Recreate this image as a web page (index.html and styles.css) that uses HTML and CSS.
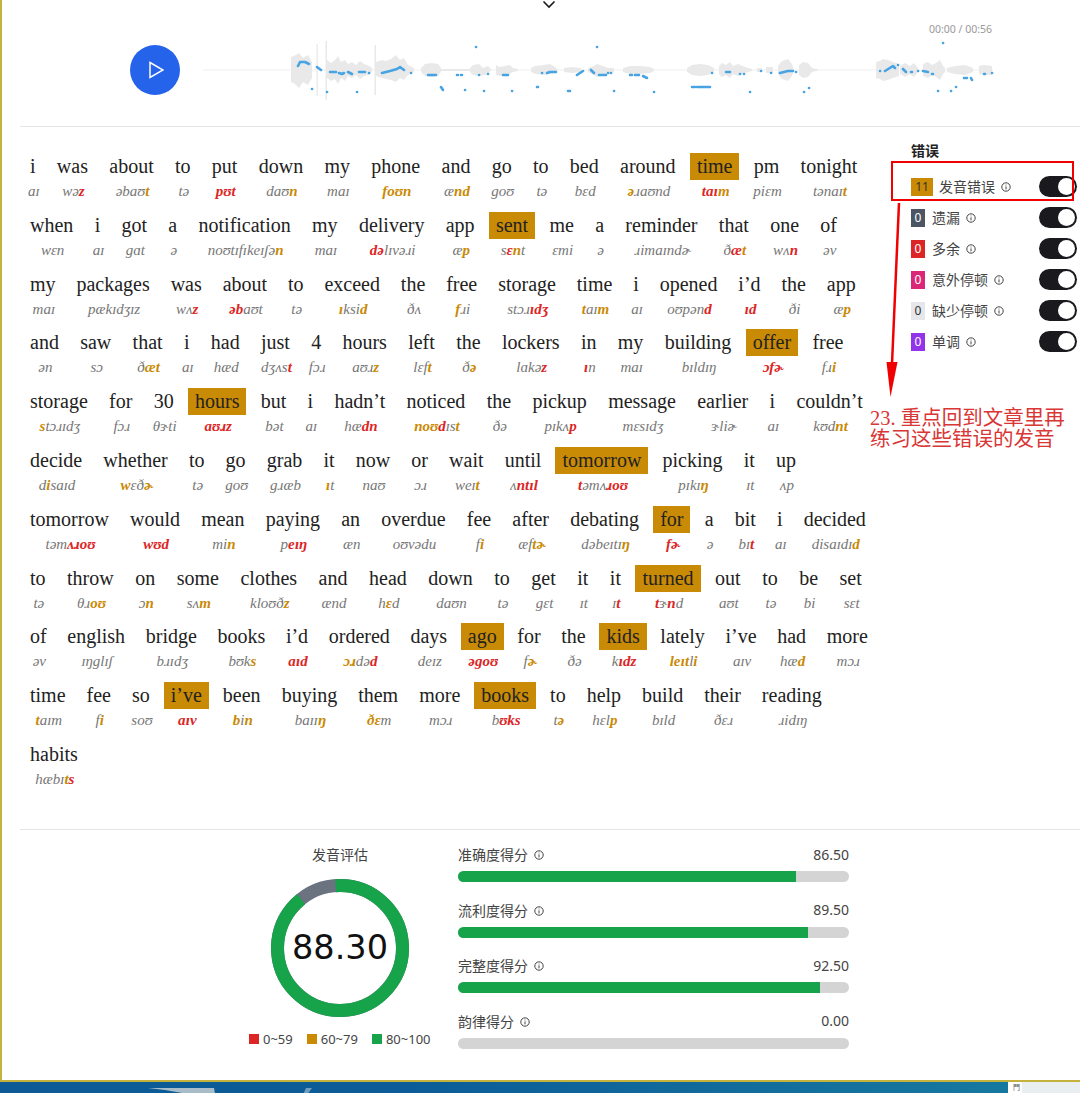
FILE: index.html
```html
<!DOCTYPE html>
<html lang="en">
<head>
  <meta charset="UTF-8">
  <title>发音评估</title>
  <link rel="stylesheet" href="styles.css">
</head>
<body>
  <svg class="defs" width="0" height="0">
    <symbol id="info" viewBox="0 0 10 10">
      <circle cx="5" cy="5" r="4.2" fill="none" stroke="currentColor" stroke-width="1"/>
      <path d="M5 4.4V7.4M5 2.6V3.4" stroke="currentColor" stroke-width="1"/>
    </symbol>
  </svg>

  <div class="window">
    <div class="player">
      <div class="chevron">
        <svg width="14" height="9" viewBox="0 0 14 9"><path d="M1.5 1.5L7 7L12.5 1.5" fill="none" stroke="#1a1a1a" stroke-width="1.6"/></svg>
      </div>
      <div class="time">00:00 / 00:56</div>
      <div class="player-row">
        <div class="play">
          <svg width="15" height="18" viewBox="0 0 15 18"><path d="M1 1.5L14 9L1 16.500Z" fill="none" stroke="#fff" stroke-width="1.5"/></svg>
        </div>
        <svg class="wave" width="800" height="60" viewBox="197 40 800 60">
          <path d="M203 70H993" stroke="#efefef" stroke-width="1"/>
          <g class="blobs">
            <path d="M291 57L296 55L299 53L303 58L308 55L312 62V78L308 85L303 82L299 88L295 84L291 82Z"/>
            <path d="M316.500 44H317.800V96H316.500ZM325.500 41H327V100H325.500ZM374.500 45H376V95H374.500Z"/>
            <path d="M327 60L331 63L335 60L338 56L341 62L345 60L348 64L352 62L356 65L360 61L364 64L369 66L372 68V72L369 75L364 76L360 79L356 75L352 78L348 76L345 81L341 78L338 84L335 79L331 81L327 78Z"/>
            <path d="M376 62L382 60L386 61L391 59L396 55L400 60L404 58L408 65L414 68V72L408 75L404 80L400 78L396 82L391 80L386 79L382 78L376 76Z"/>
            <path d="M421 68L425 64L432 63L438 64L441 68V72L438 76L432 77L425 76L421 72Z"/>
            <path d="M441 69H470V71H441Z"/>
            <path d="M470 68L473 65L479 64L483 68L488 66L491 69L490 72L486 75L479 76L473 75L470 72Z"/>
            <path d="M496 65L499 67L505 66L510 65L513 68L518 69V71L513 72L508 75L500 76L496 75Z"/>
            <path d="M531 68L535 66L544 65L550 64L555 67L558 70L554 73L544 75L536 74L531 72Z"/>
            <path d="M564 68L572 67L581 68V72L572 73L564 72Z"/>
            <path d="M588 68L594 66L597 64L603 66L608 68L614 68V72L608 74L597 77L592 74L588 72Z"/>
            <path d="M623 68L630 66L640 66L650 67L654 69V71L650 73L640 74L630 74L623 72Z"/>
            <path d="M687 68L692 65L700 64L708 65L714 68V72L708 75L700 76L692 75L687 72Z"/>
            <path d="M719 66L722 63L726 65L730 62L733 66L738 64L745 67L752 69V71L745 73L738 76L733 74L730 78L726 75L722 77L719 74Z"/>
            <path d="M757 68L762 68V72L757 72ZM766 67L773 67V73L766 73Z"/>
            <path d="M778 66L782 61L785 60L788 59L792 64L794 70L792 76L788 81L785 80L782 79L778 74Z"/>
            <path d="M799 65L803 62L808 63L812 68L818 69.500V70.500L812 72L808 77L803 78L799 75Z"/>
            <path d="M876 62L880 61L883 59L888 60L893 62L899 64V76L893 78L888 80L883 81L880 79L876 78Z"/>
            <path d="M900 66L905 63L910 66L914 63L918 68V72L914 77L910 74L905 77L900 74Z"/>
            <path d="M923 64L928 62L932 65L936 63L940 60L943 66L945 68V72L943 74L940 80L936 77L932 75L928 78L923 76Z"/>
            <path d="M947 68L955 66L965 65L973 68V72L965 75L955 74L947 72Z"/>
            <path d="M979 66L984 65L992 66V75L984 75L979 74Z"/>
          </g>
          <path class="pitch" d="M298 66L300 62L305 62L309 64M317 67L321 70M330 72H336M339 73L342 74L344 73M348 72L352 74M359 72H365M369 73H369.100M382 73L390 71L397 69L400 67L404 70M411 73H411.100M428 75H436M457 75H458M461 75H462M479 75H479.100M488 74H488.100M503 75H508M312 89H312.100M327 92H327.100M357 92H357.100M441 87L443 90M465 90H465.100M484 91H484.100M512 91H512.100M537 87H538M476 47H476.100M542 73H542.100M547 73L550 72L556 72M577 75L583 71M591 70L594 73M599 75H606M608 73H608.100M611 73H611.100M630 75H632M635 75H639M643 76L647 78M597 47H597.100M568 91H570M614 91H614.100M654 92H654.100M692 87H695M697 87H710M712 73H712.100M726 72H730M740 74H740.100M744 74H744.100M761 71H761.100M771 73H771.100M780 73L788 71L793 71M796 72H796.100M750 92H750.100M804 92H804.100M809 88H809.100M880 71H880.100M885 71L893 66L895 68M898 65H898.100M903 69L906 72M911 72H912M918 71H918.100M923 71L928 72M932 74H933M943 43H943.100M938 91H938.100M951 91H951.100M956 87H956.100M964 78H967M971 78L972 80M984 74H985M992 73H992.100"/>
        </svg>
      </div>
    </div>

    <div class="main">
      <div class="passage">
        <div class="line">
          <div class="word"><span class="w">i</span><span class="ipa"><i>aɪ</i></span></div>
          <div class="word"><span class="w">was</span><span class="ipa"><i>wə<b class="r">z</b></i></span></div>
          <div class="word"><span class="w">about</span><span class="ipa"><i>əbaʊ<b class="y">t</b></i></span></div>
          <div class="word"><span class="w">to</span><span class="ipa"><i>tə</i></span></div>
          <div class="word"><span class="w">put</span><span class="ipa"><i><b class="r">pʊt</b></i></span></div>
          <div class="word"><span class="w">down</span><span class="ipa"><i>daʊ<b class="y">n</b></i></span></div>
          <div class="word"><span class="w">my</span><span class="ipa"><i>maɪ</i></span></div>
          <div class="word"><span class="w">phone</span><span class="ipa"><i><b class="y">foʊn</b></i></span></div>
          <div class="word"><span class="w">and</span><span class="ipa"><i>æ<b class="y">nd</b></i></span></div>
          <div class="word"><span class="w">go</span><span class="ipa"><i>goʊ</i></span></div>
          <div class="word"><span class="w">to</span><span class="ipa"><i>tə</i></span></div>
          <div class="word"><span class="w">bed</span><span class="ipa"><i>bɛd</i></span></div>
          <div class="word"><span class="w">around</span><span class="ipa"><i><b class="y">ə</b>ɹaʊnd</i></span></div>
          <div class="word hl"><span class="w">time</span><span class="ipa"><i><b class="r">taɪ</b><b class="y">m</b></i></span></div>
          <div class="word"><span class="w">pm</span><span class="ipa"><i>piɛm</i></span></div>
          <div class="word"><span class="w">tonight</span><span class="ipa"><i>tənaɪ<b class="y">t</b></i></span></div>
        </div>
        <div class="line">
          <div class="word"><span class="w">when</span><span class="ipa"><i>wɛn</i></span></div>
          <div class="word"><span class="w">i</span><span class="ipa"><i>aɪ</i></span></div>
          <div class="word"><span class="w">got</span><span class="ipa"><i>gɑt</i></span></div>
          <div class="word"><span class="w">a</span><span class="ipa"><i>ə</i></span></div>
          <div class="word"><span class="w">notification</span><span class="ipa"><i>noʊtɪfɪkeɪʃə<b class="y">n</b></i></span></div>
          <div class="word"><span class="w">my</span><span class="ipa"><i>maɪ</i></span></div>
          <div class="word"><span class="w">delivery</span><span class="ipa"><i><b class="r">də</b>lɪvəɹi</i></span></div>
          <div class="word"><span class="w">app</span><span class="ipa"><i>æ<b class="y">p</b></i></span></div>
          <div class="word hl"><span class="w">sent</span><span class="ipa"><i>s<b class="r">ɛ</b><b class="y">n</b>t</i></span></div>
          <div class="word"><span class="w">me</span><span class="ipa"><i>ɛmi</i></span></div>
          <div class="word"><span class="w">a</span><span class="ipa"><i>ə</i></span></div>
          <div class="word"><span class="w">reminder</span><span class="ipa"><i>ɹimaɪndɚ</i></span></div>
          <div class="word"><span class="w">that</span><span class="ipa"><i>ð<b class="r">æ</b><b class="y">t</b></i></span></div>
          <div class="word"><span class="w">one</span><span class="ipa"><i>wʌ<b class="r">n</b></i></span></div>
          <div class="word"><span class="w">of</span><span class="ipa"><i>əv</i></span></div>
        </div>
        <div class="line">
          <div class="word"><span class="w">my</span><span class="ipa"><i>maɪ</i></span></div>
          <div class="word"><span class="w">packages</span><span class="ipa"><i>pækɪdʒɪz</i></span></div>
          <div class="word"><span class="w">was</span><span class="ipa"><i>wʌ<b class="r">z</b></i></span></div>
          <div class="word"><span class="w">about</span><span class="ipa"><i><b class="r">əb</b>aʊt</i></span></div>
          <div class="word"><span class="w">to</span><span class="ipa"><i>tə</i></span></div>
          <div class="word"><span class="w">exceed</span><span class="ipa"><i><b class="y">ɪ</b>ksi<b class="y">d</b></i></span></div>
          <div class="word"><span class="w">the</span><span class="ipa"><i>ðʌ</i></span></div>
          <div class="word"><span class="w">free</span><span class="ipa"><i><b class="y">f</b>ɹi</i></span></div>
          <div class="word"><span class="w">storage</span><span class="ipa"><i>stɔɹ<b class="r">ɪdʒ</b></i></span></div>
          <div class="word"><span class="w">time</span><span class="ipa"><i><b class="y">t</b>aɪ<b class="y">m</b></i></span></div>
          <div class="word"><span class="w">i</span><span class="ipa"><i>aɪ</i></span></div>
          <div class="word"><span class="w">opened</span><span class="ipa"><i>oʊpən<b class="r">d</b></i></span></div>
          <div class="word"><span class="w">i’d</span><span class="ipa"><i><b class="r">ɪd</b></i></span></div>
          <div class="word"><span class="w">the</span><span class="ipa"><i>ði</i></span></div>
          <div class="word"><span class="w">app</span><span class="ipa"><i>æ<b class="y">p</b></i></span></div>
        </div>
        <div class="line">
          <div class="word"><span class="w">and</span><span class="ipa"><i>ən</i></span></div>
          <div class="word"><span class="w">saw</span><span class="ipa"><i>sɔ</i></span></div>
          <div class="word"><span class="w">that</span><span class="ipa"><i>ð<b class="y">æt</b></i></span></div>
          <div class="word"><span class="w">i</span><span class="ipa"><i>aɪ</i></span></div>
          <div class="word"><span class="w">had</span><span class="ipa"><i>hæd</i></span></div>
          <div class="word"><span class="w">just</span><span class="ipa"><i>dʒʌs<b class="r">t</b></i></span></div>
          <div class="word"><span class="w">4</span><span class="ipa"><i>fɔɹ</i></span></div>
          <div class="word"><span class="w">hours</span><span class="ipa"><i>aʊɹ<b class="y">z</b></i></span></div>
          <div class="word"><span class="w">left</span><span class="ipa"><i>lɛf<b class="y">t</b></i></span></div>
          <div class="word"><span class="w">the</span><span class="ipa"><i>ð<b class="y">ə</b></i></span></div>
          <div class="word"><span class="w">lockers</span><span class="ipa"><i>lɑkə<b class="r">z</b></i></span></div>
          <div class="word"><span class="w">in</span><span class="ipa"><i><b class="r">ɪ</b>n</i></span></div>
          <div class="word"><span class="w">my</span><span class="ipa"><i>maɪ</i></span></div>
          <div class="word"><span class="w">building</span><span class="ipa"><i>bɪldɪŋ</i></span></div>
          <div class="word hl"><span class="w">offer</span><span class="ipa"><i><b class="r">ɔfɚ</b></i></span></div>
          <div class="word"><span class="w">free</span><span class="ipa"><i>fɹ<b class="y">i</b></i></span></div>
        </div>
        <div class="line">
          <div class="word"><span class="w">storage</span><span class="ipa"><i><b class="y">s</b>tɔɹɪdʒ</i></span></div>
          <div class="word"><span class="w">for</span><span class="ipa"><i>fɔɹ</i></span></div>
          <div class="word"><span class="w">30</span><span class="ipa"><i>θɝti</i></span></div>
          <div class="word hl"><span class="w">hours</span><span class="ipa"><i><b class="r">aʊɹz</b></i></span></div>
          <div class="word"><span class="w">but</span><span class="ipa"><i>bət</i></span></div>
          <div class="word"><span class="w">i</span><span class="ipa"><i>aɪ</i></span></div>
          <div class="word"><span class="w">hadn’t</span><span class="ipa"><i>hæ<b class="r">dn</b></i></span></div>
          <div class="word"><span class="w">noticed</span><span class="ipa"><i><b class="y">noʊ</b><b class="r">d</b>ɪs<b class="y">t</b></i></span></div>
          <div class="word"><span class="w">the</span><span class="ipa"><i>ðə</i></span></div>
          <div class="word"><span class="w">pickup</span><span class="ipa"><i>pɪkʌ<b class="r">p</b></i></span></div>
          <div class="word"><span class="w">message</span><span class="ipa"><i>mɛsɪdʒ</i></span></div>
          <div class="word"><span class="w">earlier</span><span class="ipa"><i>ɝliɚ</i></span></div>
          <div class="word"><span class="w">i</span><span class="ipa"><i>aɪ</i></span></div>
          <div class="word"><span class="w">couldn’t</span><span class="ipa"><i>kʊd<b class="y">nt</b></i></span></div>
        </div>
        <div class="line">
          <div class="word"><span class="w">decide</span><span class="ipa"><i>d<b class="y">i</b>saɪd</i></span></div>
          <div class="word"><span class="w">whether</span><span class="ipa"><i><b class="y">w</b>ɛð<b class="y">ɚ</b></i></span></div>
          <div class="word"><span class="w">to</span><span class="ipa"><i>tə</i></span></div>
          <div class="word"><span class="w">go</span><span class="ipa"><i>goʊ</i></span></div>
          <div class="word"><span class="w">grab</span><span class="ipa"><i>gɹæb</i></span></div>
          <div class="word"><span class="w">it</span><span class="ipa"><i><b class="y">ɪ</b>t</i></span></div>
          <div class="word"><span class="w">now</span><span class="ipa"><i>naʊ</i></span></div>
          <div class="word"><span class="w">or</span><span class="ipa"><i>ɔɹ</i></span></div>
          <div class="word"><span class="w">wait</span><span class="ipa"><i>weɪ<b class="y">t</b></i></span></div>
          <div class="word"><span class="w">until</span><span class="ipa"><i>ʌ<b class="r">ntɪl</b></i></span></div>
          <div class="word hl"><span class="w">tomorrow</span><span class="ipa"><i><b class="r">t</b>əmʌ<b class="r">ɹoʊ</b></i></span></div>
          <div class="word"><span class="w">picking</span><span class="ipa"><i>pɪkɪ<b class="y">ŋ</b></i></span></div>
          <div class="word"><span class="w">it</span><span class="ipa"><i>ɪt</i></span></div>
          <div class="word"><span class="w">up</span><span class="ipa"><i>ʌp</i></span></div>
        </div>
        <div class="line">
          <div class="word"><span class="w">tomorrow</span><span class="ipa"><i>təm<b class="r">ʌɹoʊ</b></i></span></div>
          <div class="word"><span class="w">would</span><span class="ipa"><i><b class="r">wʊd</b></i></span></div>
          <div class="word"><span class="w">mean</span><span class="ipa"><i>mi<b class="y">n</b></i></span></div>
          <div class="word"><span class="w">paying</span><span class="ipa"><i>p<b class="r">eɪŋ</b></i></span></div>
          <div class="word"><span class="w">an</span><span class="ipa"><i>æn</i></span></div>
          <div class="word"><span class="w">overdue</span><span class="ipa"><i>oʊvədu</i></span></div>
          <div class="word"><span class="w">fee</span><span class="ipa"><i>f<b class="y">i</b></i></span></div>
          <div class="word"><span class="w">after</span><span class="ipa"><i>æf<b class="y">tɚ</b></i></span></div>
          <div class="word"><span class="w">debating</span><span class="ipa"><i>dəbeɪtɪ<b class="y">ŋ</b></i></span></div>
          <div class="word hl"><span class="w">for</span><span class="ipa"><i><b class="r">fɚ</b></i></span></div>
          <div class="word"><span class="w">a</span><span class="ipa"><i>ə</i></span></div>
          <div class="word"><span class="w">bit</span><span class="ipa"><i>bɪ<b class="r">t</b></i></span></div>
          <div class="word"><span class="w">i</span><span class="ipa"><i>aɪ</i></span></div>
          <div class="word"><span class="w">decided</span><span class="ipa"><i>disaɪdɪ<b class="y">d</b></i></span></div>
        </div>
        <div class="line">
          <div class="word"><span class="w">to</span><span class="ipa"><i>tə</i></span></div>
          <div class="word"><span class="w">throw</span><span class="ipa"><i>θɹ<b class="y">oʊ</b></i></span></div>
          <div class="word"><span class="w">on</span><span class="ipa"><i>ɔ<b class="y">n</b></i></span></div>
          <div class="word"><span class="w">some</span><span class="ipa"><i>sʌ<b class="y">m</b></i></span></div>
          <div class="word"><span class="w">clothes</span><span class="ipa"><i>kloʊð<b class="y">z</b></i></span></div>
          <div class="word"><span class="w">and</span><span class="ipa"><i>ænd</i></span></div>
          <div class="word"><span class="w">head</span><span class="ipa"><i>h<b class="y">ɛ</b>d</i></span></div>
          <div class="word"><span class="w">down</span><span class="ipa"><i>daʊn</i></span></div>
          <div class="word"><span class="w">to</span><span class="ipa"><i>tə</i></span></div>
          <div class="word"><span class="w">get</span><span class="ipa"><i>gɛt</i></span></div>
          <div class="word"><span class="w">it</span><span class="ipa"><i>ɪt</i></span></div>
          <div class="word"><span class="w">it</span><span class="ipa"><i>ɪ<b class="r">t</b></i></span></div>
          <div class="word hl"><span class="w">turned</span><span class="ipa"><i><b class="r">t</b>ɝ<b class="r">n</b>d</i></span></div>
          <div class="word"><span class="w">out</span><span class="ipa"><i>aʊt</i></span></div>
          <div class="word"><span class="w">to</span><span class="ipa"><i>tə</i></span></div>
          <div class="word"><span class="w">be</span><span class="ipa"><i>bi</i></span></div>
          <div class="word"><span class="w">set</span><span class="ipa"><i>sɛt</i></span></div>
        </div>
        <div class="line">
          <div class="word"><span class="w">of</span><span class="ipa"><i>əv</i></span></div>
          <div class="word"><span class="w">english</span><span class="ipa"><i>ɪŋglɪʃ</i></span></div>
          <div class="word"><span class="w">bridge</span><span class="ipa"><i>bɹɪdʒ</i></span></div>
          <div class="word"><span class="w">books</span><span class="ipa"><i>bʊk<b class="y">s</b></i></span></div>
          <div class="word"><span class="w">i’d</span><span class="ipa"><i><b class="r">aɪd</b></i></span></div>
          <div class="word"><span class="w">ordered</span><span class="ipa"><i><b class="y">ɔɹ</b>də<b class="r">d</b></i></span></div>
          <div class="word"><span class="w">days</span><span class="ipa"><i>deɪz</i></span></div>
          <div class="word hl"><span class="w">ago</span><span class="ipa"><i><b class="r">əgoʊ</b></i></span></div>
          <div class="word"><span class="w">for</span><span class="ipa"><i>f<b class="y">ɚ</b></i></span></div>
          <div class="word"><span class="w">the</span><span class="ipa"><i>ðə</i></span></div>
          <div class="word hl"><span class="w">kids</span><span class="ipa"><i>k<b class="r">ɪdz</b></i></span></div>
          <div class="word"><span class="w">lately</span><span class="ipa"><i><b class="y">leɪt</b>l<b class="y">i</b></i></span></div>
          <div class="word"><span class="w">i’ve</span><span class="ipa"><i>aɪv</i></span></div>
          <div class="word"><span class="w">had</span><span class="ipa"><i>hæ<b class="y">d</b></i></span></div>
          <div class="word"><span class="w">more</span><span class="ipa"><i>mɔɹ</i></span></div>
        </div>
        <div class="line">
          <div class="word"><span class="w">time</span><span class="ipa"><i><b class="y">t</b>aɪm</i></span></div>
          <div class="word"><span class="w">fee</span><span class="ipa"><i>f<b class="y">i</b></i></span></div>
          <div class="word"><span class="w">so</span><span class="ipa"><i>soʊ</i></span></div>
          <div class="word hl"><span class="w">i’ve</span><span class="ipa"><i><b class="r">aɪv</b></i></span></div>
          <div class="word"><span class="w">been</span><span class="ipa"><i><b class="y">b</b>i<b class="y">n</b></i></span></div>
          <div class="word"><span class="w">buying</span><span class="ipa"><i>baɪɪ<b class="y">ŋ</b></i></span></div>
          <div class="word"><span class="w">them</span><span class="ipa"><i><b class="y">ðɛ</b>m</i></span></div>
          <div class="word"><span class="w">more</span><span class="ipa"><i>mɔɹ</i></span></div>
          <div class="word hl"><span class="w">books</span><span class="ipa"><i>b<b class="r">ʊks</b></i></span></div>
          <div class="word"><span class="w">to</span><span class="ipa"><i>t<b class="y">ə</b></i></span></div>
          <div class="word"><span class="w">help</span><span class="ipa"><i>hɛl<b class="y">p</b></i></span></div>
          <div class="word"><span class="w">build</span><span class="ipa"><i>bɪld</i></span></div>
          <div class="word"><span class="w">their</span><span class="ipa"><i>ðɛɹ</i></span></div>
          <div class="word"><span class="w">reading</span><span class="ipa"><i>ɹidɪŋ</i></span></div>
        </div>
        <div class="line">
          <div class="word"><span class="w">habits</span><span class="ipa"><i>hæbɪ<b class="y">t</b><b class="r">s</b></i></span></div>
        </div>
      </div>

      <div class="errors">
        <div class="errors-title">错误</div>
        <div class="err-row"><span class="badge amber">11</span><span class="err-label">发音错误</span><svg class="info"><use href="#info"/></svg><span class="toggle"></span></div>
        <div class="err-row"><span class="badge slate">0</span><span class="err-label">遗漏</span><svg class="info"><use href="#info"/></svg><span class="toggle"></span></div>
        <div class="err-row"><span class="badge red">0</span><span class="err-label">多余</span><svg class="info"><use href="#info"/></svg><span class="toggle"></span></div>
        <div class="err-row"><span class="badge pink">0</span><span class="err-label">意外停顿</span><svg class="info"><use href="#info"/></svg><span class="toggle"></span></div>
        <div class="err-row"><span class="badge light">0</span><span class="err-label">缺少停顿</span><svg class="info"><use href="#info"/></svg><span class="toggle"></span></div>
        <div class="err-row"><span class="badge purple">0</span><span class="err-label">单调</span><svg class="info"><use href="#info"/></svg><span class="toggle"></span></div>
      </div>
    </div>

    <div class="scores">
      <div class="overall">
        <div class="overall-title">发音评估</div>
        <div class="donut">
          <svg width="140" height="140" viewBox="0 0 140 140">
            <circle cx="70" cy="70" r="62.500" fill="none" stroke="#6b7280" stroke-width="13"/>
            <circle cx="70" cy="70" r="62.500" fill="none" stroke="#16a34a" stroke-width="13" stroke-dasharray="354.500 392.700" transform="rotate(-94 70 70)"/>
            <text x="70" y="80.500" text-anchor="middle" class="donut-num">88.30</text>
          </svg>
        </div>
        <div class="legend">
          <span class="legend-item"><span class="swatch red"></span>0~59</span>
          <span class="legend-item"><span class="swatch amber"></span>60~79</span>
          <span class="legend-item"><span class="swatch green"></span>80~100</span>
        </div>
      </div>
      <div class="bars">
        <div class="bar-row">
          <div class="bar-head"><span class="bar-label">准确度得分</span><svg class="info"><use href="#info"/></svg><span class="bar-val">86.50</span></div>
          <div class="track"><div class="fill" style="width: 86.5%"></div></div>
        </div>
        <div class="bar-row">
          <div class="bar-head"><span class="bar-label">流利度得分</span><svg class="info"><use href="#info"/></svg><span class="bar-val">89.50</span></div>
          <div class="track"><div class="fill" style="width: 89.5%"></div></div>
        </div>
        <div class="bar-row">
          <div class="bar-head"><span class="bar-label">完整度得分</span><svg class="info"><use href="#info"/></svg><span class="bar-val">92.50</span></div>
          <div class="track"><div class="fill" style="width: 92.5%"></div></div>
        </div>
        <div class="bar-row">
          <div class="bar-head"><span class="bar-label">韵律得分</span><svg class="info"><use href="#info"/></svg><span class="bar-val">0.00</span></div>
          <div class="track"><div class="fill" style="width: 0%"></div></div>
        </div>
      </div>
    </div>

    <!-- red notes drawn on top of the screenshot -->
    <svg class="marks" width="200" height="250" viewBox="880 155 200 250">
      <rect x="892" y="162" width="181" height="38" fill="none" stroke="#f00000" stroke-width="2"/>
      <path d="M899 203L892 364" stroke="#f00000" stroke-width="2.500"/>
      <path d="M886.500 362H897.500L890.500 397Z" fill="#f00000"/>
    </svg>
    <div class="note">23. 重点回到文章里再<br>练习这些错误的发音</div>
  </div>

  <div class="desktop">
    <div class="wallpaper">
      <svg width="1008" height="11" viewBox="0 0 1008 11">
        <path d="M148 0L214 0L216 11H204L198 7L182 5L165 2Z" fill="#a9bdc9"/>
        <path d="M306 0H312L304 11H301Z" fill="#6f9dbd"/>
      </svg>
    </div>
    <div class="tray"><span class="tray-icon">門</span></div>
  </div>
</body>
</html>
```

FILE: styles.css
```css
* {margin: 0; padding: 0; box-sizing: border-box;}
body {
  width: 1080px;
  height: 1093px;
  overflow: hidden;
  background: #fff;
  font-family: "Noto Sans", "Noto Sans CJK SC", sans-serif;
  color: #444;
}
.defs {
  position: absolute;
}

.window {
  position: relative;
  height: 1082px;
  padding-left: 18px;
  border-left: 2px solid #c4b23c;
  border-bottom: 2px solid #c4b23c;
  overflow: hidden;
}

/* player */
.player {
  height: 127px;
  border-bottom: 1px solid #e5e5e5;
}
.chevron {
  display: flex;
  justify-content: center;
  height: 9px;
  padding-right: 2px;
  margin-bottom: 13px;
}
.time {
  padding-right: 88px;
  text-align: right;
  font-size: 10.500px;
  line-height: 14px;
  color: #999;
  margin-bottom: 4px;
}
.player-row {
  display: flex;
  align-items: center;
  height: 60px;
  padding-left: 110px;
}
.play {
  display: flex;
  align-items: center;
  justify-content: center;
  width: 50px;
  height: 50px;
  padding-left: 3px;
  border-radius: 50%;
  background: #2563eb;
  margin-right: 17px;
}
.wave {
  flex: none;
}
.blobs {
  fill: #e9e9e9;
  filter: blur(0.6px);
}
.pitch {
  fill: none;
  stroke: #48a3e2;
  stroke-width: 2.600;
  stroke-linecap: round;
  stroke-linejoin: round;
}

/* passage */
.main {
  display: flex;
  height: 702px;
}
.passage {
  flex: 1;
  padding: 26px 0 0 3px;
}
.line {
  display: flex;
  gap: 7.300px;
  height: 58.800px;
}
/* the serif here runs a little wider than the original, so some lines are tightened */
.line:nth-child(3) {
  gap: 6.900px;
}
.line:nth-child(6),
.line:nth-child(7) {
  gap: 7.150px;
}
.line:nth-child(8) {
  gap: 7.500px;
}
.line:nth-child(9) {
  gap: 6.650px;
}
.line:nth-child(10) {
  gap: 7px;
}
.word {
  display: flex;
  flex-direction: column;
  padding: 0 7px;
}
.w {
  display: block;
  font-family: "Liberation Serif", serif;
  font-size: 20px;
  line-height: 27px;
  color: #222;
  margin: 0 -7px;
  padding: 0 7px;
  white-space: nowrap;
}
.hl .w {
  background: #c98a05;
}
.ipa {
  display: flex;
  justify-content: center;
  align-self: center;
  width: 0;
  margin: 1px 0 0 2px;
  font-family: "Liberation Serif", serif;
  font-size: 15px;
  line-height: 20px;
  color: #777;
  white-space: nowrap;
}
.r {
  color: #dc2626;
}
.y {
  color: #ca8a04;
}

/* error list */
.errors {
  flex: none;
  width: 169px;
  padding: 14px 3px 0 0;
}
.errors-title {
  font-size: 14px;
  line-height: 20px;
  font-weight: 700;
  color: #222;
  margin-bottom: 10px;
}
.err-row {
  display: flex;
  align-items: center;
  height: 31px;
}
.badge {
  width: 14px;
  height: 18px;
  margin-right: 7px;
  text-align: center;
  font-size: 12px;
  line-height: 18px;
  color: #fff;
}
.badge.amber {
  width: 22px;
  margin-right: 6px;
  background: #ca8a04;
  color: #333;
}
.badge.slate {
  background: #4b5563;
}
.badge.red {
  background: #dc2626;
}
.badge.pink {
  background: #db2777;
}
.badge.light {
  background: #e5e7eb;
  color: #333;
}
.badge.purple {
  background: #9333ea;
}
.err-label {
  padding-bottom: 2px;
  font-size: 14px;
  color: #444;
}
.info {
  width: 10px;
  height: 10px;
  margin-left: 6px;
  color: #444;
}
.toggle {
  position: relative;
  width: 38px;
  height: 21px;
  margin-left: auto;
  border-radius: 11px;
  background: #1a1a1e;
}
.toggle::after {
  content: "";
  position: absolute;
  top: 2px;
  right: 2px;
  width: 17px;
  height: 17px;
  border-radius: 50%;
  background: #fff;
}

/* scores */
.scores {
  display: flex;
  gap: 18px;
  height: 251px;
  padding: 15px 0 0 220px;
  border-top: 1px solid #e5e5e5;
}
.overall {
  width: 200px;
}
.overall-title {
  text-align: center;
  font-size: 14px;
  line-height: 20px;
  margin-bottom: 13px;
}
.donut {
  display: flex;
  justify-content: center;
  height: 140px;
}
.donut-num {
  font-family: "DejaVu Sans", sans-serif;
  font-size: 33.500px;
  fill: #111;
}
.legend {
  display: flex;
  gap: 14px;
  padding-left: 9px;
  margin-top: 13px;
}
.legend-item {
  display: flex;
  align-items: center;
  gap: 4px;
  font-size: 13px;
  line-height: 16px;
}
.swatch {
  width: 10px;
  height: 10px;
}
.swatch.red {
  background: #dc2626;
}
.swatch.amber {
  background: #ca8a04;
}
.swatch.green {
  background: #16a34a;
}
.bars {
  display: flex;
  flex-direction: column;
  gap: 18.500px;
  width: 391px;
}
.bar-head {
  display: flex;
  align-items: center;
  height: 18px;
  margin-bottom: 8px;
  font-size: 14px;
}
.bar-head .info {
  margin-top: 2px;
}
.bar-val {
  margin-left: auto;
}
.track {
  height: 11px;
  border-radius: 6px;
  background: #d4d4d4;
  overflow: hidden;
}
.fill {
  height: 100%;
  background: #16a34a;
}

/* annotation */
.marks {
  position: absolute;
  left: 878px;
  top: 155px;
}
.note {
  position: absolute;
  left: 868px;
  top: 408px;
  font-family: "Liberation Serif", "Noto Sans CJK SC", serif;
  font-size: 20.500px;
  line-height: 21px;
  color: #d93636;
  white-space: nowrap;
}

/* desktop below the window */
.desktop {
  display: flex;
  height: 11px;
}
.wallpaper {
  width: 1008px;
  height: 11px;
  background: linear-gradient(90deg, #0d5a96, #0b5c98 40%, #17789f 100%);
}
.tray {
  flex: 1;
  background: #e9eef1;
}
.tray-icon {
  display: block;
  width: 14px;
  padding-left: 5px;
  background: #fff;
  font-size: 7px;
  line-height: 11px;
  color: #555;
}
```
